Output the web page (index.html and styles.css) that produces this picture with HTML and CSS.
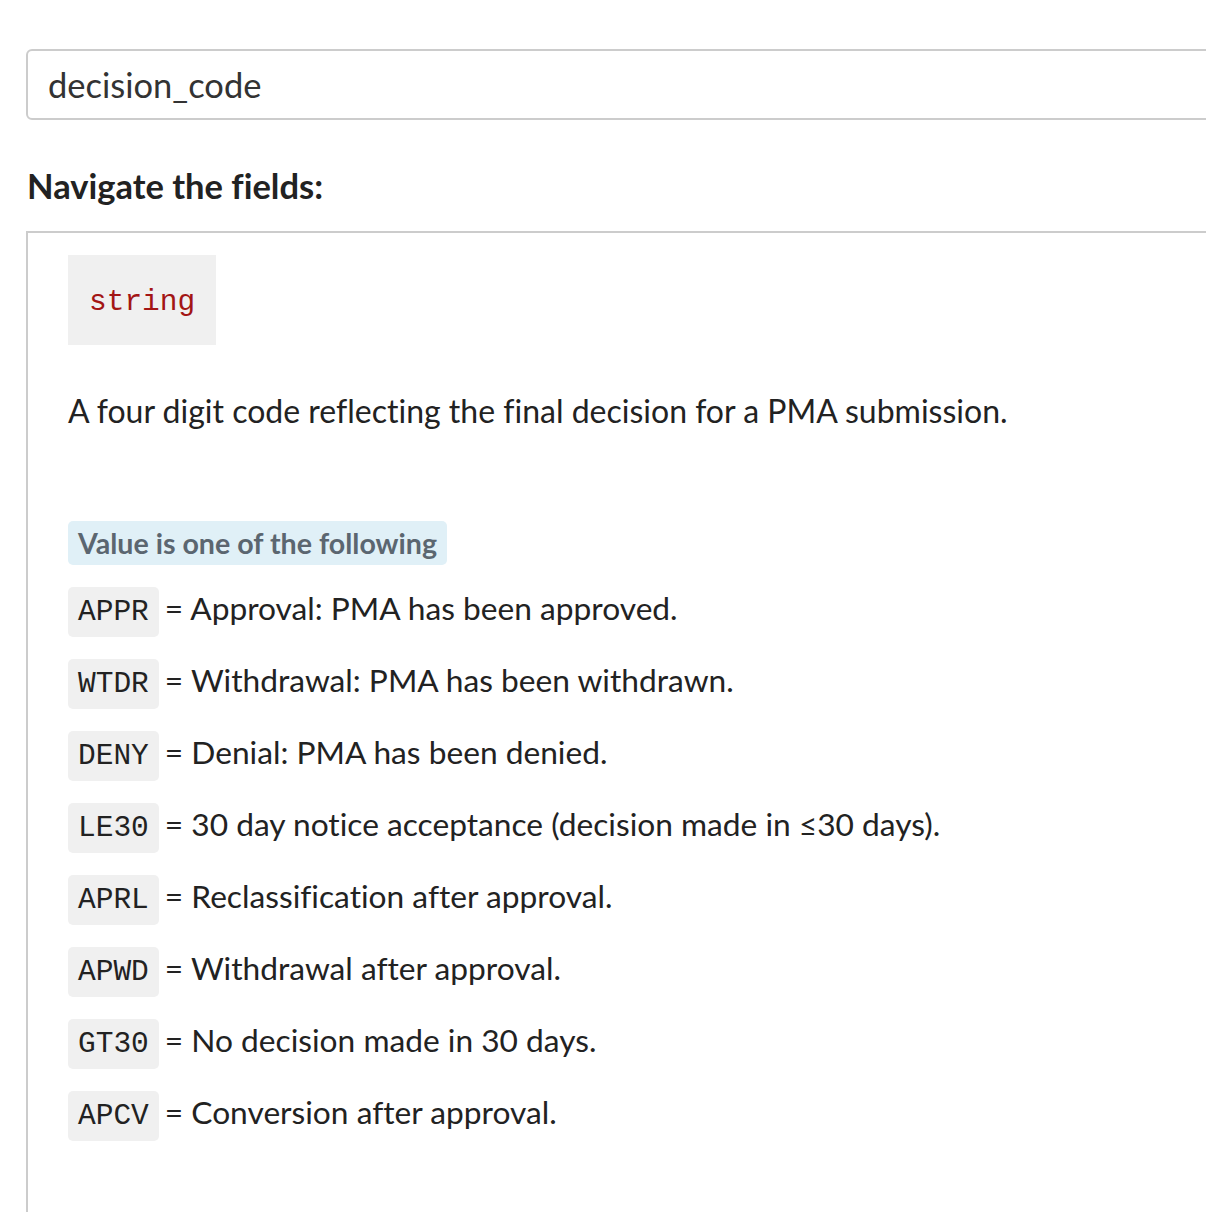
FILE: index.html
```html
<!DOCTYPE html>
<html lang="en">
<head>
<meta charset="utf-8">
<title>decision_code</title>
<link rel="stylesheet" href="styles.css">
</head>
<body>
<div class="page">
  <div class="search-box">decision_code</div>
  <h2 class="nav-title">Navigate the fields:</h2>
  <div class="field-panel">
    <div class="type-block"><code class="type-code">string</code></div>
    <p class="description">A four digit code reflecting the final decision for a PMA submission.</p>
    <div class="enum-label">Value is one of the following</div>
    <div class="enum-row"><code class="enum-code">APPR</code><span class="enum-text">= Approval: PMA has been approved.</span></div>
    <div class="enum-row"><code class="enum-code">WTDR</code><span class="enum-text">= Withdrawal: PMA has been withdrawn.</span></div>
    <div class="enum-row"><code class="enum-code">DENY</code><span class="enum-text">= Denial: PMA has been denied.</span></div>
    <div class="enum-row"><code class="enum-code">LE30</code><span class="enum-text">= 30 day notice acceptance (decision made in ≤30 days).</span></div>
    <div class="enum-row"><code class="enum-code">APRL</code><span class="enum-text">= Reclassification after approval.</span></div>
    <div class="enum-row"><code class="enum-code">APWD</code><span class="enum-text">= Withdrawal after approval.</span></div>
    <div class="enum-row"><code class="enum-code">GT30</code><span class="enum-text">= No decision made in 30 days.</span></div>
    <div class="enum-row"><code class="enum-code">APCV</code><span class="enum-text">= Conversion after approval.</span></div>
  </div>
</div>
</body>
</html>
```
FILE: styles.css
```css
html, body {
  margin: 0;
  padding: 0;
  background: #fff;
  overflow: hidden;
}
body {
  font-family: "Lato", "Noto Sans", sans-serif;
  font-variant-ligatures: none;
  color: #222;
}
.page {
  padding: 49px 0 0 26px;
  margin-right: -80px;
}
.search-box {
  height: 67px;
  border: 2px solid #cccccc;
  border-radius: 6px;
  padding-left: 20px;
  font-size: 34.5px;
  line-height: 67px;
  color: #333;
}
.nav-title {
  margin: 46px 0 0 1px;
  font-size: 34.5px;
  font-weight: 700;
  line-height: 40px;
  color: #222;
}
.field-panel {
  margin-top: 25px;
  border-top: 2px solid #cccccc;
  border-left: 2px solid #cccccc;
  padding: 22px 40px 200px;
}
.type-code {
  display: inline-block;
  background: #f0f0f0;
  color: #a31515;
  font-family: "Liberation Mono", monospace;
  font-size: 29.5px;
  line-height: 46px;
  padding: 24px 21px 20px;
}
.description {
  margin: 46px 0 0;
  font-size: 32px;
  line-height: 40px;
}
.enum-label {
  width: fit-content;
  margin-top: 90px;
  background: #e0f0f7;
  color: #5b6670;
  font-weight: 700;
  font-size: 28.6px;
  line-height: 44px;
  padding: 0 10px;
  border-radius: 5px;
}
.enum-row {
  display: flex;
  align-items: baseline;
  gap: 6px;
  margin-top: 22px;
}
.enum-code {
  display: block;
  background: #f0f0f0;
  color: #222;
  font-family: "Liberation Mono", monospace;
  font-size: 29.5px;
  line-height: 50px;
  height: 50px;
  padding: 0 10px;
  border-radius: 5px;
}
.enum-text {
  font-size: 31.7px;
  line-height: 40px;
}
```
